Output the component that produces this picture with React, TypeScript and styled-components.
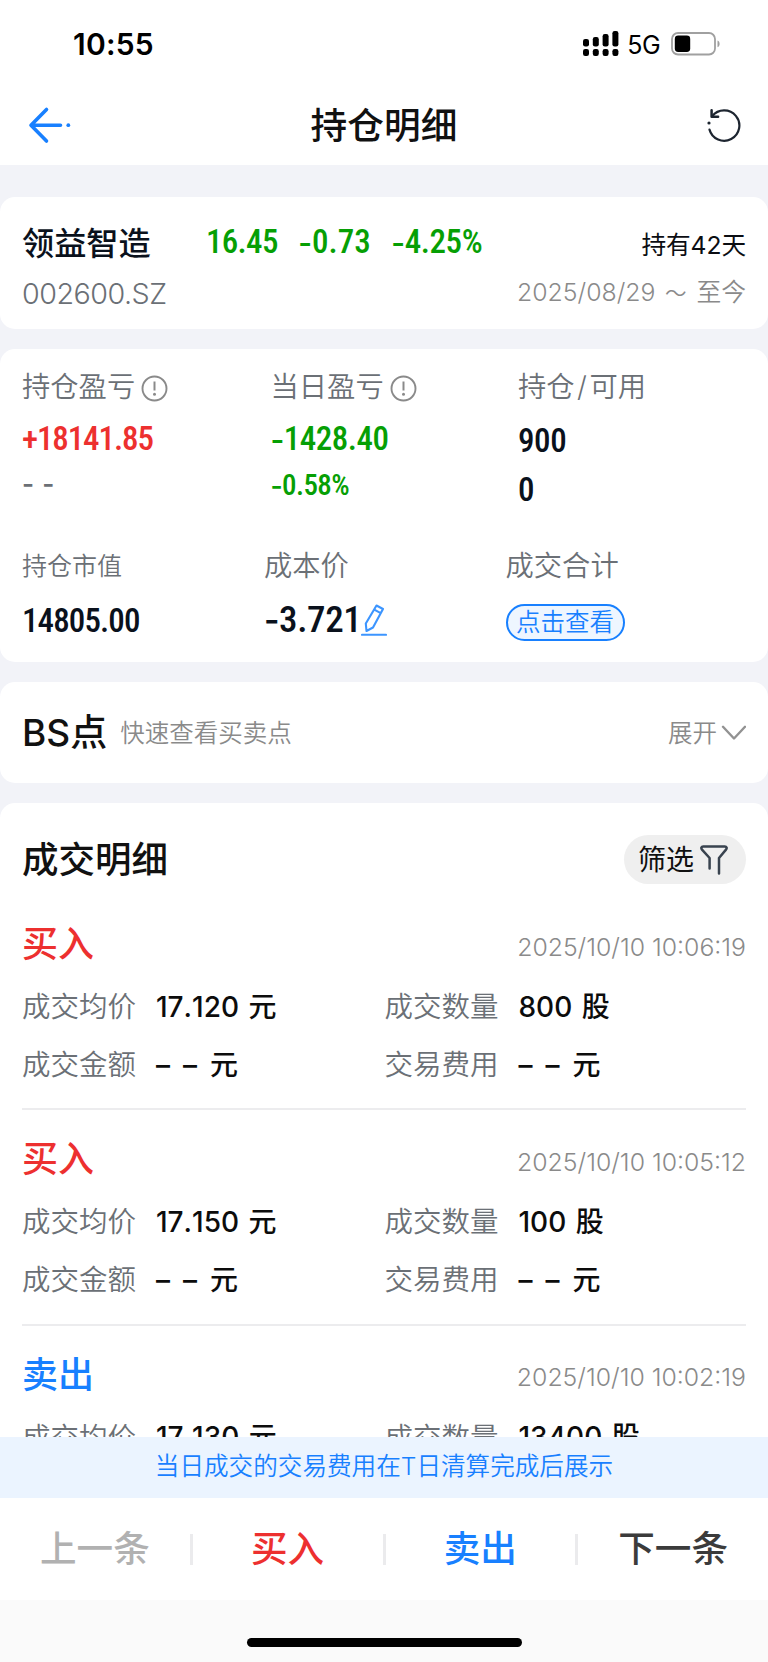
import React from "react";
import styled, { createGlobalStyle } from "styled-components";

const color = {
  ink: "#0b0d12",
  navy: "#0a111c",
  label: "#6b7076",
  muted: "#8a8a8a",
  red: "#ed302f",
  green: "#069f04",
  blue: "#1880ff",
  page: "#f2f3f8",
};

const GlobalStyle = createGlobalStyle`
  * { box-sizing: border-box; }
  body { margin: 0; background: ${color.page}; }
`;

const Screen = styled.div`
  width: 768px;
  height: 1662px;
  display: flex;
  flex-direction: column;
  overflow: hidden;
  background: ${color.page};
  color: ${color.ink};
  font-family: Inter, "Noto Sans CJK SC", sans-serif;
  white-space: nowrap;
`;

const StatusBar = styled.div`
  height: 88px;
  flex: none;
  display: flex;
  align-items: center;
  justify-content: space-between;
  padding: 0 48px 0 73px;
  background: #fff;
`;

const Clock = styled.span`
  font-size: 30px;
  line-height: 40px;
  font-weight: 600;
  letter-spacing: 0.2px;
  color: #000;
`;

const StatusIcons = styled.div`
  display: flex;
  align-items: center;
`;

const Network = styled.span`
  margin: 1px 11px 0 8px;
  font-size: 25px;
  line-height: 30px;
  color: #000;
  letter-spacing: -0.6px;
`;

const TitleBar = styled.header`
  height: 77px;
  flex: none;
  display: grid;
  grid-template-columns: 100px 1fr 100px;
  align-items: center;
  padding: 0 27px;
  background: #fff;

  > svg { margin-bottom: 3px; }
  > svg:last-child { justify-self: end; }
`;

const PageTitle = styled.h1`
  margin: 0;
  text-align: center;
  font-size: 36.7px;
  line-height: 48px;
  padding-bottom: 1px;
  font-weight: 500;
  color: #111;
`;

const Content = styled.main`
  flex: 1;
  min-height: 0;
  overflow: hidden;
  display: flex;
  flex-direction: column;
  gap: 20px;
  padding-top: 32px;
`;

const Card = styled.section<{ $height: number; $pad: string }>`
  flex: none;
  height: ${(p) => p.$height}px;
  padding: ${(p) => p.$pad};
  border-radius: 15px;
  background: #fff;
`;

const Line = styled.div<{ $height: number }>`
  display: flex;
  align-items: center;
  justify-content: space-between;
  height: ${(p) => p.$height}px;
`;

const StockName = styled.span`
  width: 184px;
  padding-top: 2px;
  font-size: 32.2px;
  line-height: 40px;
  font-weight: 500;
  color: ${color.navy};
`;

const Quote = styled.div`
  flex: 1;
  display: flex;
  gap: 20.5px;
  padding-bottom: 2px;
`;

const HeldDays = styled.span`
  font-size: 24.7px;
  line-height: 34px;
  font-weight: 400;
  letter-spacing: -0.1px;
  padding-top: 3px;
`;

const Code = styled.span`
  padding-top: 3px;
  font-size: 28.7px;
  line-height: 40px;
  font-weight: 350;
  letter-spacing: -0.5px;
  color: ${color.label};
`;

const DateText = styled.span<{ $drop?: number }>`
  padding-top: ${(p) => p.$drop ?? 0}px;
  font-size: 24.8px;
  line-height: 34px;
  font-weight: 350;
  color: ${color.muted};
`;

const Tilde = styled.span`
  margin: 0 3px 0 2.5px;
  font-size: 21.5px;
  line-height: 20px;
`;

const Figure = styled.span<{ $tone?: string; $size?: number; $spacing?: number }>`
  font-family: "Roboto Condensed", Roboto, sans-serif;
  font-stretch: condensed;
  font-weight: 500;
  font-size: ${(p) => p.$size ?? 33}px;
  line-height: 40px;
  letter-spacing: ${(p) => p.$spacing ?? -0.4}px;
  color: ${(p) => p.$tone ?? color.navy};
`;

const Minus = styled.span`
  font-family: Inter, sans-serif;
  font-size: 0.9em;
  font-weight: 600;
`;

const Blank = styled.span`
  padding-bottom: 2px;
  font-size: 26px;
  line-height: 38px;
  font-weight: 600;
  letter-spacing: 0.3px;
  word-spacing: 1px;
  color: ${color.label};
`;

const ProfitGrid = styled.div`
  display: grid;
  grid-template-columns: 248.5px 247.5px 1fr;
`;

const ValueGrid = styled.div`
  display: grid;
  grid-template-columns: 242px 241.5px 1fr;
  margin-top: 34px;
`;

const Stat = styled.div`
  display: flex;
  flex-direction: column;
  align-items: flex-start;
`;

const StatLabel = styled.div<{ $small?: boolean }>`
  display: flex;
  align-items: center;
  height: 40px;
  padding-top: 4px;
  font-size: ${(p) => (p.$small ? 25 : 28.3)}px;
  line-height: 36px;
  font-weight: 350;
  color: ${color.label};

  svg { margin: 2px 0 0 6px; }
`;

const Slash = styled.span`
  margin: 0 2.5px;
`;

const StatValue = styled.div<{ $top: number }>`
  display: flex;
  align-items: center;
  height: 40px;
  margin-top: ${(p) => p.$top}px;
`;

const ViewButton = styled.button`
  width: 119px;
  height: 37px;
  padding: 0;
  border: 2px solid ${color.blue};
  border-radius: 19px;
  background: #eef6ff;
  color: ${color.blue};
  font: 350 24.5px/31px Inter, "Noto Sans CJK SC", sans-serif;
`;

const SectionTitle = styled.h2<{ $size: number }>`
  margin: 0;
  font-size: ${(p) => p.$size}px;
  line-height: 50px;
  font-weight: 500;
  color: #111;
`;

const Hint = styled.span`
  flex: 1;
  padding-left: 13px;
  font-size: 24.5px;
  line-height: 34px;
  font-weight: 350;
  color: ${color.muted};
`;

const Expand = styled.span`
  display: flex;
  align-items: center;
  gap: 4px;
  font-size: 24.5px;
  line-height: 34px;
  font-weight: 350;
  color: ${color.muted};
`;

const FilterButton = styled.button`
  display: flex;
  align-items: center;
  gap: 5.5px;
  width: 122px;
  height: 49px;
  padding: 0 0 0 14px;
  border: 0;
  border-radius: 25px;
  background: #efefef;
  color: #111;
  font: 400 28px/40px Inter, "Noto Sans CJK SC", sans-serif;
`;

const TradeList = styled.div`
  margin-top: 11px;
`;

const Trade = styled.article`
  height: 215.3px;
  padding-top: 17.5px;
  border-bottom: 2px solid #ececee;
`;

const Side = styled.span<{ $tone: string }>`
  font-size: 36px;
  line-height: 50px;
  font-weight: 500;
  color: ${(p) => p.$tone};
`;

const TradeRow = styled.dl`
  display: grid;
  grid-template-columns: 134px 228.5px 134px 1fr;
  align-items: center;
  height: 58px;
  margin: 0;
  font-size: 28.5px;

  dt { font-weight: 350; color: ${color.label}; }
`;

const Amount = styled.dd<{ $blank?: boolean }>`
  margin: 0;
  font-size: 28px;
  font-weight: 500;
  font-kerning: none;
  word-spacing: ${(p) => (p.$blank ? 5.5 : 2)}px;
  color: #0c0c0c;
`;

const Notice = styled.div`
  flex: none;
  height: 61px;
  text-align: center;
  font-size: 24.6px;
  line-height: 59px;
  font-weight: 350;
  color: ${color.blue};
  background: #ebf4ff;
`;

const ActionBar = styled.nav`
  flex: none;
  display: grid;
  grid-template-columns: 1fr 3px 1fr 3px 1fr 3px 1fr;
  align-items: center;
  height: 102px;
  background: #fff;
`;

const Action = styled.a<{ $tone: string }>`
  text-align: center;
  font-size: 36.6px;
  line-height: 50px;
  font-weight: 500;
  color: ${(p) => p.$tone};
`;

const Divider = styled.i`
  height: 31px;
  background: #ebebed;
`;

const HomeArea = styled.footer`
  flex: none;
  display: flex;
  justify-content: center;
  height: 62px;
  padding-top: 38px;
  background: #fafafa;
`;

const HomeIndicator = styled.div`
  width: 275px;
  height: 9px;
  border-radius: 5px;
  background: #000;
`;

const SignalIcon = () => (
  <svg width="36" height="26" viewBox="0 0 36 26">
    {[7.5, 9.5, 12.5, 15.5].map((h, i) => (
      <g key={i}>
        <rect x={i * 9.8} y={15.5 - h} width="6" height={h} rx="2.2" />
        <rect x={i * 9.8} y="18" width="6" height="7" rx="2.2" />
      </g>
    ))}
  </svg>
);

const BatteryIcon = () => (
  <svg width="49" height="24" viewBox="0 0 49 24">
    <rect x="1" y="1" width="43" height="21.5" rx="6" fill="none" stroke="#a0a0a0" strokeWidth="1.8" />
    <rect x="3.8" y="3.6" width="15.4" height="16.4" rx="3.4" />
    <path d="M46.5 8.5c2.8 1 2.8 5.8 0 6.8z" fill="#a0a0a0" />
  </svg>
);

const BackIcon = () => (
  <svg width="46" height="40" viewBox="0 0 46 40" fill="none" stroke={color.blue} strokeWidth="3.6" strokeLinecap="round" strokeLinejoin="round">
    <path d="M19.5 4.5 4 20.2l15.5 15.8M4 20.2h29.5" />
    <circle cx="41.3" cy="20.2" r="1.9" fill={color.blue} stroke="none" />
  </svg>
);

const RefreshIcon = () => (
  <svg width="36" height="38" viewBox="0 0 36 38" fill="none" stroke="#1d2530" strokeWidth="2.2" strokeLinecap="round" strokeLinejoin="round">
    <path d="M7.2 10.2A15.2 15.2 0 1 1 4.5 23.6" />
    <path d="M6.6 4.2v6.6h6.5" strokeWidth="2.5" />
    <circle cx="4" cy="17" r="1.6" fill="#1d2530" stroke="none" />
  </svg>
);

const InfoIcon = () => (
  <svg width="27" height="27" viewBox="0 0 27 27" fill="none" stroke="#8a8a8a" strokeWidth="1.9">
    <circle cx="13.5" cy="13.5" r="12" />
    <path d="M13.5 6.5v9" strokeWidth="2" />
    <circle cx="13.5" cy="19.3" r="1.5" fill="#8a8a8a" stroke="none" />
  </svg>
);

const PencilIcon = () => (
  <svg width="26" height="34" viewBox="0 0 26 34" fill="none" stroke="#3c95ff" strokeWidth="2.1" strokeLinejoin="round">
    <path d="M15.5 2.5 22 6 12 24.5 5.5 28 4.8 20.5zM13.3 6.7l6.4 3.5" />
    <path d="M1 31.8h24" strokeLinecap="round" />
  </svg>
);

const ChevronIcon = () => (
  <svg width="25" height="16" viewBox="0 0 25 16" fill="none" stroke="#929292" strokeWidth="2.4" strokeLinecap="round" strokeLinejoin="round">
    <path d="M2 1.8 13 13.5 24 1.8" />
  </svg>
);

const FilterIcon = () => (
  <svg width="28" height="32" viewBox="0 0 28 32" fill="none" stroke="#39434f" strokeWidth="2.5" strokeLinecap="round" strokeLinejoin="round">
    <path d="M9.6 24.5v-10.5L2 5.6C.8 4 1.3 2.6 3.2 2.6h21.6c1.9 0 2.4 1.4 1.2 3L19 14v15.5" />
  </svg>
);

const trades = [
  { side: "买入", tone: color.red, time: "2025/10/10 10:06:19", price: "17.120", count: "800", detailed: true },
  { side: "买入", tone: color.red, time: "2025/10/10 10:05:12", price: "17.150", count: "100", detailed: true },
  { side: "卖出", tone: color.blue, time: "2025/10/10 10:02:19", price: "17.130", count: "13400", detailed: false },
];

export default function App() {
  return (
    <Screen>
      <GlobalStyle />
      <StatusBar>
        <Clock>10:55</Clock>
        <StatusIcons>
          <SignalIcon />
          <Network>5G</Network>
          <BatteryIcon />
        </StatusIcons>
      </StatusBar>
      <TitleBar>
        <BackIcon />
        <PageTitle>持仓明细</PageTitle>
        <RefreshIcon />
      </TitleBar>

      <Content>
        <Card $height={132} $pad="22px 22px 0">
          <Line $height={48}>
            <StockName>领益智造</StockName>
            <Quote>
              <Figure $tone={color.green} $spacing={-0.7}>16.45</Figure>
              <Figure $tone={color.green} $spacing={0}><Minus>-</Minus>0.73</Figure>
              <Figure $tone={color.green} $spacing={-0.4}><Minus>-</Minus>4.25%</Figure>
            </Quote>
            <HeldDays>持有42天</HeldDays>
          </Line>
          <Line $height={50}>
            <Code>002600.SZ</Code>
            <DateText>2025/08/29 <Tilde>～</Tilde> 至今</DateText>
          </Line>
        </Card>

        <Card $height={313} $pad="16px 22px 0">
          <ProfitGrid>
            <Stat>
              <StatLabel>持仓盈亏<InfoIcon /></StatLabel>
              <StatValue $top={14}><Figure $tone={color.red} $spacing={-1.1}>+18141.85</Figure></StatValue>
              <StatValue $top={6}><Blank>- -</Blank></StatValue>
            </Stat>
            <Stat>
              <StatLabel>当日盈亏<InfoIcon /></StatLabel>
              <StatValue $top={14}><Figure $tone={color.green} $spacing={-0.5}><Minus>-</Minus>1428.40</Figure></StatValue>
              <StatValue $top={6}><Figure $tone={color.green} $size={29} $spacing={-0.6}><Minus>-</Minus>0.58%</Figure></StatValue>
            </Stat>
            <Stat>
              <StatLabel>持仓<Slash>/</Slash>可用</StatLabel>
              <StatValue $top={16}><Figure>900</Figure></StatValue>
              <StatValue $top={9}><Figure>0</Figure></StatValue>
            </Stat>
          </ProfitGrid>
          <ValueGrid>
            <Stat>
              <StatLabel $small>持仓市值</StatLabel>
              <StatValue $top={17}><Figure $spacing={-0.9}>14805.00</Figure></StatValue>
            </Stat>
            <Stat>
              <StatLabel>成本价</StatLabel>
              <StatValue $top={16}><Figure $size={37}><Minus>-</Minus>3.721</Figure><PencilIcon /></StatValue>
            </Stat>
            <Stat>
              <StatLabel>成交合计</StatLabel>
              <StatValue $top={18}><ViewButton>点击查看</ViewButton></StatValue>
            </Stat>
          </ValueGrid>
        </Card>

        <Card $height={101} $pad="0 22px">
          <Line $height={101}>
            <SectionTitle $size={37}>BS点</SectionTitle>
            <Hint>快速查看买卖点</Hint>
            <Expand>展开<ChevronIcon /></Expand>
          </Line>
        </Card>

        <Card $height={700} $pad="32px 22px 0">
          <Line $height={49}>
            <SectionTitle $size={36.5}>成交明细</SectionTitle>
            <FilterButton>筛选<FilterIcon /></FilterButton>
          </Line>
          <TradeList>
            {trades.map((t) => (
              <Trade key={t.time}>
                <Line $height={63}>
                  <Side $tone={t.tone}>{t.side}</Side>
                  <DateText $drop={5}>{t.time}</DateText>
                </Line>
                <TradeRow>
                  <dt>成交均价</dt><Amount>{t.price} 元</Amount>
                  <dt>成交数量</dt><Amount>{t.count} 股</Amount>
                </TradeRow>
                {t.detailed && (
                  <TradeRow>
                    <dt>成交金额</dt><Amount $blank>– – 元</Amount>
                    <dt>交易费用</dt><Amount $blank>– – 元</Amount>
                  </TradeRow>
                )}
              </Trade>
            ))}
          </TradeList>
        </Card>
      </Content>

      <Notice>当日成交的交易费用在T日清算完成后展示</Notice>
      <ActionBar>
        <Action $tone="#b1b1b1">上一条</Action>
        <Divider />
        <Action $tone={color.red}>买入</Action>
        <Divider />
        <Action $tone={color.blue}>卖出</Action>
        <Divider />
        <Action $tone="#3b3b3b">下一条</Action>
      </ActionBar>
      <HomeArea><HomeIndicator /></HomeArea>
    </Screen>
  );
}
